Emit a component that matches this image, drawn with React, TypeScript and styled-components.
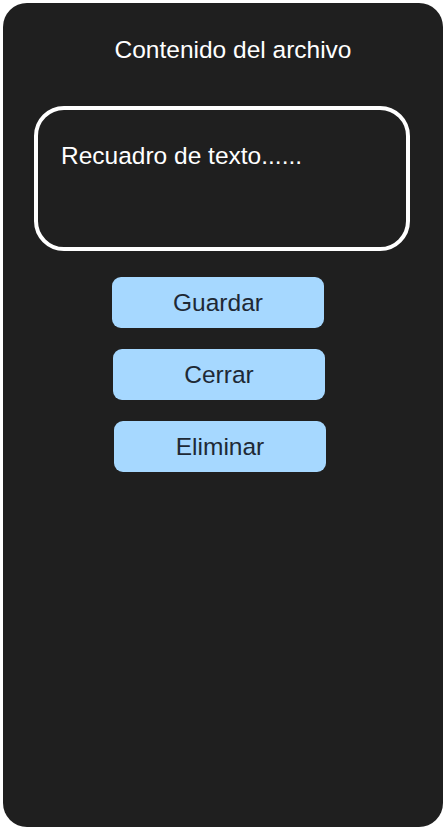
import React from "react";

import styled, { createGlobalStyle } from "styled-components";

const GlobalStyle = createGlobalStyle`
    html, body {
        margin: 0;
        padding: 0;
        background: #ffffff;
    }

    body {
        font-family: "Liberation Sans", Arial, sans-serif;
    }
`;

type Action = {
    label: string,
    nudge: number,
};

const actions: Action[] = [
    { label: "Guardar", nudge: 0 },
    { label: "Cerrar", nudge: 1 },
    { label: "Eliminar", nudge: 2 },
];

const App: React.FC = () => {
    return (
        <>
            <GlobalStyle />
            <Frame>
                <Title>Contenido del archivo</Title>
                <TextBox>
                    <BoxText>Recuadro de texto......</BoxText>
                </TextBox>
                <Actions>
                    {actions.map((a) => {
                        return (
                            <ActionButton key={a.label} $nudge={a.nudge}>
                                {a.label}
                            </ActionButton>
                        );
                    })}
                </Actions>
            </Frame>
        </>
    );
};

const Frame = styled.div`
    box-sizing: border-box;
    margin: 3px 0 0 3px;
    width: 440px;
    height: 824px;
    background-color: #1f1f1f;
    border-radius: 24px;
    padding-top: 32.5px;

    display: flex;
    flex-direction: column;
`;

const Title = styled.h1`
    margin: 0;
    padding-left: 20px;
    font-size: 24.5px;
    font-weight: 400;
    line-height: 28px;
    color: #ffffff;
    text-align: center;
`;

const TextBox = styled.div`
    box-sizing: border-box;
    margin: 42.5px 0 0 31px;
    width: 376px;
    height: 145px;
    border: 4px solid #ffffff;
    border-radius: 30px;
    padding: 31.5px 0 0 23px;
`;

const BoxText = styled.p`
    margin: 0;
    font-size: 24.5px;
    line-height: 28px;
    color: #ffffff;
`;

const Actions = styled.div`
    margin: 26px 0 0 109px;
    display: flex;
    flex-direction: column;
    gap: 21px;
`;

type NudgeProps = {
    $nudge: number;
};

const ActionButton = styled.button<NudgeProps>`
    box-sizing: border-box;
    margin-left: ${props => props.$nudge}px;
    width: 212px;
    height: 51px;
    border: none;
    border-radius: 9px;
    background-color: #a6d8ff;
    color: #1e2935;
    font-family: "Liberation Sans", Arial, sans-serif;
    font-size: 24.5px;
    line-height: 28px;
    padding: 0;
    cursor: pointer;
`;

export default App;
